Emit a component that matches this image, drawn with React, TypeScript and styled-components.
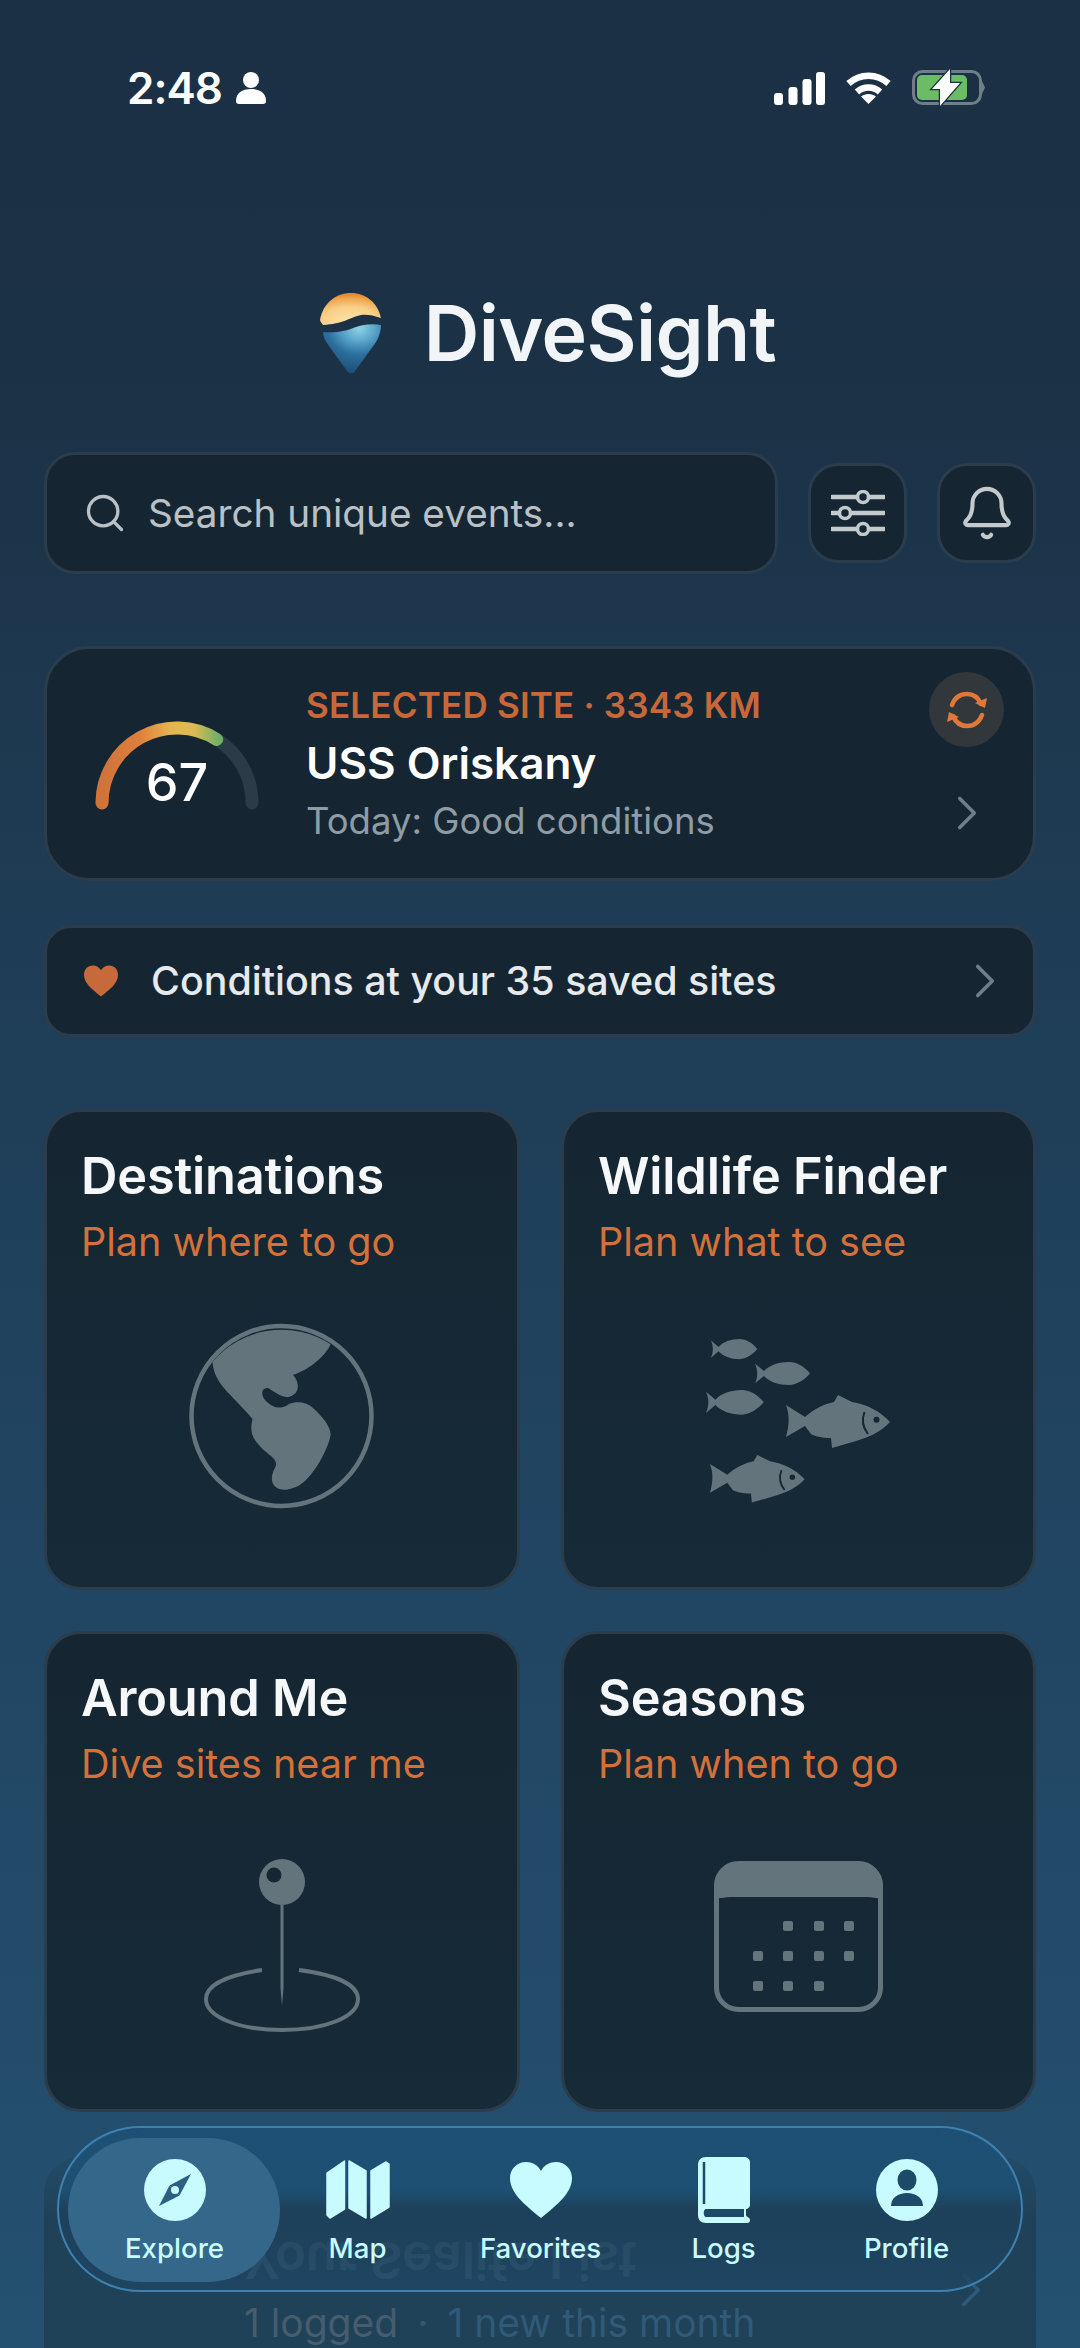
import React from "react"
import styled, { createGlobalStyle } from "styled-components"
import { Bell, ChevronRight, Search } from "lucide-react"

const GlobalStyle = createGlobalStyle`
  html, body {
    margin: 0;
    padding: 0;
    background: #1b3045;
  }
  * {
    box-sizing: border-box;
  }
`

const Page = styled.div`
  position: relative;
  width: 1080px;
  height: 2348px;
  padding: 0 44px;
  overflow: hidden;
  font-family: Inter, "Liberation Sans", sans-serif;
  background: linear-gradient(180deg, #1b3045 0%, #1b3146 16%, #1e3b53 36%, #214562 66%, #245170 100%);
`

const StatusBar = styled.div`
  display: flex;
  align-items: center;
  height: 36px;
  margin-top: 70px;
  padding: 0 51px 0 83px;
  color: #fff;
`

const Time = styled.span`
  font-size: 44px;
  font-weight: 600;
  line-height: 36px;
  margin-right: 14px;
  letter-spacing: -1px;
`

const StatusIcons = styled.div`
  display: flex;
  align-items: center;
  gap: 21px;
  margin-left: auto;
`

const Brand = styled.div`
  display: flex;
  align-items: center;
  justify-content: center;
  gap: 38px;
  height: 100px;
  margin-top: 177px;
  padding-left: 12px;
`

const BrandName = styled.h1`
  margin: 0;
  font-size: 77px;
  font-weight: 600;
  letter-spacing: -0.6px;
  color: #f2f5f7;
`

const SearchRow = styled.div`
  display: flex;
  align-items: center;
  gap: 30px;
  margin-top: 69px;
`

const SearchBox = styled.div`
  display: flex;
  align-items: center;
  gap: 21px;
  flex: 1;
  height: 122px;
  padding: 0 36px;
  background: #152632;
  border: 3px solid #2b3c4c;
  border-radius: 31px;
  color: #b9c1c7;
  font-size: 38.700px;
`

const IconButton = styled.div`
  display: flex;
  align-items: center;
  justify-content: center;
  width: 99px;
  height: 100px;
  background: #152632;
  border: 3px solid #2b3c4c;
  border-radius: 30px;
  color: #c3cace;
`

const SiteCard = styled.div`
  display: flex;
  align-items: center;
  height: 235px;
  margin-top: 72px;
  padding: 0 29px 0 47px;
  background: #152632;
  border: 3px solid #2b3c4c;
  border-radius: 45px;
`

const Gauge = styled.div`
  position: relative;
  width: 166px;
  height: 92px;
  margin: 2px 46px 0 0;
`

const GaugeValue = styled.span`
  position: absolute;
  left: 0;
  right: 0;
  bottom: -3px;
  text-align: center;
  font-size: 52px;
  font-weight: 500;
  color: #fff;
`

const SiteText = styled.div`
  display: flex;
  flex-direction: column;
`

const SiteLabel = styled.span`
  font-size: 35px;
  font-weight: 600;
  line-height: 40px;
  letter-spacing: 0.2px;
  color: #c8673a;
`

const SiteName = styled.span`
  margin-top: 11px;
  font-size: 44px;
  font-weight: 600;
  line-height: 54px;
  color: #fff;
`

const SiteStatus = styled.span`
  margin-top: 9px;
  font-size: 36.500px;
  line-height: 44px;
  color: #8f9ca5;
`

const SiteActions = styled.div`
  display: flex;
  flex-direction: column;
  align-items: center;
  gap: 37px;
  margin: -13px 0 0 auto;
  color: #6f7f8a;
`

const RefreshButton = styled.div`
  display: flex;
  align-items: center;
  justify-content: center;
  width: 75px;
  height: 75px;
  border-radius: 50%;
  background: #31373b;
`

const SavedRow = styled.div`
  display: flex;
  align-items: center;
  height: 112px;
  margin-top: 44px;
  padding: 0 19px 0 37px;
  background: #152632;
  border: 3px solid #2b3c4c;
  border-radius: 27px;
  font-size: 39.400px;
  font-weight: 500;
  color: #e6eaed;
`

const SavedText = styled.span`
  margin-left: 33px;
`

const SavedChevron = styled.span`
  display: flex;
  margin-left: auto;
  color: #6f7f8a;
`

const Grid = styled.div`
  display: grid;
  grid-template-columns: 476px 475px;
  grid-auto-rows: 481px;
  column-gap: 41px;
  row-gap: 41px;
  margin-top: 72px;
`

const Tile = styled.div`
  display: flex;
  flex-direction: column;
  padding: 35px 34px 0;
  background: linear-gradient(180deg, #152632, #172a38);
  border: 3px solid #2b3c4c;
  border-radius: 37px;
`

const TileTitle = styled.h2`
  margin: 0;
  font-size: 50.500px;
  font-weight: 600;
  line-height: 58px;
  letter-spacing: -0.2px;
  color: #f5f7f8;
`

const TileSub = styled.span`
  margin-top: 13px;
  font-size: 39.600px;
  line-height: 48px;
  color: #d4713a;
`

const TileArt = styled.div<{ $top: number }>`
  display: flex;
  justify-content: center;
  margin-top: ${({ $top }) => $top}px;
`

const LogCard = styled.div`
  position: relative;
  display: flex;
  flex-direction: column;
  height: 300px;
  margin-top: 45px;
  padding: 74px 0 0 200px;
  background: linear-gradient(180deg, rgba(31, 66, 89, 0.25), #1f4259 20%);
  border-radius: 36px;
`

const LogTitle = styled.span`
  font-size: 50.500px;
  font-weight: 600;
  line-height: 58px;
  color: #4a6a7d;
  transform: scaleY(-1);
`

const LogSub = styled.div`
  display: flex;
  gap: 19px;
  margin-top: 11px;
  font-size: 39px;
  line-height: 46px;
  color: #2f5a78;
`

const LogCount = styled.span`
  color: #475c6c;
`

const LogChevron = styled.span`
  position: absolute;
  top: 104px;
  right: 36px;
  display: flex;
  color: #2f5a78;
  transform: scaleY(-1);
`

const NavBar = styled.nav`
  position: absolute;
  left: 57px;
  top: 2126px;
  display: flex;
  width: 966px;
  height: 166px;
  padding: 10px 0 10px 24px;
  border: 2px solid #3e80b0;
  border-radius: 84px;
  background: linear-gradient(180deg, rgba(28, 80, 116, 0.92) 0%, rgba(29, 80, 116, 0.92) 38%, rgba(30, 64, 90, 0.8) 50%, rgba(30, 70, 100, 0.75) 100%);
`

const NavItem = styled.div<{ $active?: boolean }>`
  position: relative;
  display: flex;
  flex-direction: column;
  align-items: center;
  width: 183px;
  height: 144px;
  padding-top: 19px;
  color: #c8fbff;

  &::before {
    content: "";
    display: ${({ $active }) => ($active ? "block" : "none")};
    position: absolute;
    top: 0;
    bottom: 0;
    left: -15px;
    right: -14px;
    border-radius: 72px;
    background: #34678a;
  }
`

const NavIcon = styled.div`
  position: relative;
  display: flex;
  align-items: center;
  justify-content: center;
  height: 66px;
`

const NavLabel = styled.span`
  position: relative;
  margin-top: 8px;
  font-size: 27.600px;
  font-weight: 500;
  line-height: 34px;
`

const ink = "#64747c"

const Logo = () => (
  <svg width="70" height="90" viewBox="25 18 70 90">
    <defs>
      <radialGradient id="sun" cx="50%" cy="90%" r="85%">
        <stop offset="0%" stopColor="#fde3a8" />
        <stop offset="55%" stopColor="#f8cf88" />
        <stop offset="85%" stopColor="#f0a850" />
        <stop offset="100%" stopColor="#e48a30" />
      </radialGradient>
      <radialGradient id="sea" cx="62%" cy="8%" r="90%">
        <stop offset="0%" stopColor="#8fd3e6" />
        <stop offset="30%" stopColor="#5aa6cc" />
        <stop offset="60%" stopColor="#2b6f9e" />
        <stop offset="100%" stopColor="#1f5078" />
      </radialGradient>
    </defs>
    <path d="M29 50C32 33 45 23 60 23C75 23 87 33 90 48C82 45 75 44 70 45C60 47 52 54 32 55C31 53 29 52 29 50Z" fill="url(#sun)" />
    <path d="M32 62C45 63 55 61 62 58C70 55 80 53 90 55C90 62 87 70 83 75L64 101C62 104 58 104 56 101L38 76C34 71 32 66 32 62Z" fill="url(#sea)" />
  </svg>
)

const PersonGlyph = () => (
  <svg width="30" height="32" viewBox="0 0 30 32" fill="#fff">
    <ellipse cx="15" cy="8" rx="8" ry="8" />
    <path d="M0 29c0-8 6-12 15-12s15 4 15 12c0 2-1 3-3 3H3c-2 0-3-1-3-3z" />
  </svg>
)

const SignalGlyph = () => (
  <svg width="51" height="33" viewBox="0 0 51 33" fill="#fff">
    <rect x="0" y="21" width="9" height="12" rx="3" />
    <rect x="14.500" y="15" width="9" height="18" rx="3" />
    <rect x="28.500" y="7" width="9" height="26" rx="3" />
    <rect x="42" y="0" width="9" height="33" rx="3" />
  </svg>
)

const WifiGlyph = () => (
  <svg width="45" height="33" viewBox="0 0 45 33" fill="none" stroke="#fff" strokeWidth="6.500">
    <path d="M2.500 11.500C14 1 31 1 42.500 11.500" />
    <path d="M11 20c6.500-6 16.500-6 23 0" />
    <path d="M22.500 32l-7.500-7.500c4-3.500 11-3.500 15 0z" fill="#fff" stroke="none" />
  </svg>
)

const BatteryGlyph = () => (
  <svg width="73" height="38" viewBox="0 -1 73 38">
    <rect x="1.500" y="1.500" width="67" height="32" rx="9" fill="none" stroke="#6f7f87" strokeWidth="3" />
    <rect x="5" y="5" width="50" height="25" rx="5" fill="#6bbd63" />
    <path d="M70 11L73 17.500L70 24Z" fill="#6f7f87" />
    <path d="M38 -1L20 19h8v17L48 13H38Z" fill="#fff" stroke="#1b3045" strokeWidth="2.500" paintOrder="stroke" />
  </svg>
)

const SlidersGlyph = () => (
  <svg width="54" height="46" viewBox="0 0 54 46" fill="none" stroke="currentColor">
    <path d="M1 7h25M38 7h15M1 23h7M20 23h33M1 39h25M38 39h15" strokeWidth="4.500" strokeLinecap="round" />
    <circle cx="32" cy="7" r="5.500" strokeWidth="3.500" />
    <circle cx="14" cy="23" r="5.500" strokeWidth="3.500" />
    <circle cx="32" cy="39" r="5.500" strokeWidth="3.500" />
  </svg>
)

const GaugeArc = () => (
  <svg width="166" height="92" viewBox="0 0 166 92" fill="none" strokeWidth="13" strokeLinecap="round">
    <defs>
      <linearGradient id="gaugeFill" x1="8" y1="0" x2="125" y2="0" gradientUnits="userSpaceOnUse">
        <stop offset="0%" stopColor="#cf7339" />
        <stop offset="32%" stopColor="#df7f3c" />
        <stop offset="58%" stopColor="#e3b44f" />
        <stop offset="78%" stopColor="#e0bb52" />
        <stop offset="100%" stopColor="#6fb066" />
      </linearGradient>
    </defs>
    <path d="M8 84a75 75 0 0 1 150 0" stroke="#2b3b47" />
    <path d="M8 84a75 75 0 0 1 114.700-63.600" stroke="url(#gaugeFill)" />
  </svg>
)

const RefreshGlyph = () => (
  <svg width="42" height="40" viewBox="0 0 42 40" fill="none" stroke="#e0783a" strokeWidth="4.500" strokeLinecap="round">
    <path d="M6 15C9 7 15 4 21 4c6 0 11 3 14 10" />
    <path d="M36 25c-3 8-9 11-15 11-6 0-11-3-14-10" />
    <path d="M29 13l10 5 2-10zM13 27L3 22 1 32z" fill="#e0783a" stroke="none" />
  </svg>
)

const SavedHeart = () => (
  <svg width="34" height="32" viewBox="0 0 36 33" fill="#c66a3b">
    <path d="M18 33C8 25 0 19 0 10 0 4 4 0 9.500 0 13 0 16 2 18 5c2-3 5-5 8.500-5C32 0 36 4 36 10c0 9-8 15-18 23z" />
  </svg>
)

const GlobeArt = () => (
  <svg width="186" height="186" viewBox="0 0 186 186">
    <circle cx="92.500" cy="93" r="90" fill="none" stroke={ink} strokeWidth="4.500" />
    <path fill={ink} d="M23.500 39A90 90 0 0 1 141.600 21.300C137 32 122 46 104 52C110 58 111 68 104 72C97 77 90 72 79 65C71 65 72 74 78 79C84 85 92 87 100 81C108 78 118 79 124 85C134 94 142 104 141.600 112C139 128 120 162 104 165C94 169 85 166 83 158C82 148 88 144 87 140C85 133 76 130 70 122C62 114 61 106 63.500 96C52 82 38 70 31 60C26 52 24 46 23.500 39Z" />
  </svg>
)

const fishBig = "M0 11L19 23C28 15 38 10 48 8L52 1L66 8C80 10 94 17 104 28C94 39 82 43 70 47L46 54L45 44C36 44 28 42 25 40L19 32L0 43C3 32 4 22 0 11Z"
const fishSmall = "M0 2L9 11C14 4 24 0 34 0C42 0 50 6 55 14C50 21 42 28 34 28C24 28 14 24 9 17L0 26C3 18 3 10 0 2Z"

const FishArt = () => (
  <svg width="186" height="164" viewBox="0 0 186 164" fill={ink}>
    <path d={fishSmall} transform="translate(5 0) scale(0.84 0.72)" />
    <path d={fishSmall} transform="translate(49 23) scale(1 0.82)" />
    <path d={fishSmall} transform="translate(0 51) scale(1.05 0.88)" />
    <g transform="translate(80 55)">
      <path d={fishBig} />
      <circle cx="90.500" cy="25.700" r="3" fill="#162633" />
      <path d="M78.500 18Q74 30 82 40" fill="none" stroke="#162633" strokeWidth="2" />
    </g>
    <g transform="translate(4 115) scale(0.91 0.9)">
      <path d={fishBig} />
      <circle cx="90.500" cy="25.700" r="3" fill="#162633" />
      <path d="M78.500 18Q74 30 82 40" fill="none" stroke="#162633" strokeWidth="2" />
    </g>
  </svg>
)

const PinArt = () => (
  <svg width="158" height="176" viewBox="0 0 158 176">
    <path d="M59 112C24 117 3 127 3 141C3 159 36 172 79 172C122 172 155 159 155 141C155 127 134 117 96 112" fill="none" stroke={ink} strokeWidth="4" />
    <circle cx="79" cy="24" r="23" fill={ink} />
    <circle cx="71" cy="17" r="7.500" fill="#162633" />
    <path d="M77.500 45H80.500V130L79 148L77.500 130Z" fill={ink} />
  </svg>
)

const CalendarArt = () => (
  <svg width="170" height="152" viewBox="0 0 170 152" fill={ink}>
    <rect x="2.500" y="2.500" width="164" height="146" rx="22" fill="none" stroke={ink} strokeWidth="5" />
    <path d="M2 38V24C2 11 11 1 24 1H145C158 1 167 11 167 24V38C167 38 160 36 150 36H20C10 36 2 38 2 38Z" />
    {[[69, 60], [100, 60], [130, 60], [39, 90], [69, 90], [100, 90], [130, 90], [39, 120], [69, 120], [100, 120]].map(([x, y]) => (
      <rect key={`${x}-${y}`} x={x} y={y} width="10" height="10" rx="2" />
    ))}
  </svg>
)

const CompassGlyph = () => (
  <svg width="62" height="62" viewBox="0 0 62 62">
    <circle cx="31" cy="31" r="31" fill="#c8fbff" />
    <path d="M47 15L35.500 36.500L25.500 26.500Z" fill="#2c5f80" />
    <path d="M15 47L25.500 26.500L35.500 36.500Z" fill="#2c5f80" />
    <circle cx="31" cy="31" r="4" fill="#c8fbff" />
  </svg>
)

const MapGlyph = () => (
  <svg width="64" height="60" viewBox="0 0 64 60" fill="currentColor" stroke="currentColor" strokeWidth="1.500" strokeLinejoin="round">
    <path d="M1 13L18.500 1V49L4 58L1 55Z" />
    <path d="M23 1L40 11V58L23 48Z" />
    <path d="M45 11L60 2L63 4V47L45 58Z" />
  </svg>
)

const NavHeart = () => (
  <svg width="62" height="56" viewBox="0 0 62 56" fill="currentColor">
    <path d="M31 56C14 42 0 31 0 16 0 7 7 0 16 0 22 0 28 3 31 9 34 3 40 0 46 0 55 0 62 7 62 16 62 31 48 42 31 56Z" />
  </svg>
)

const BookGlyph = () => (
  <svg width="52" height="66" viewBox="0 0 52 66">
    <path fill="currentColor" d="M8 0H46C49 0 52 2 52 5V48C52 50 50 52 48 52V58C48 60 52 60 52 63C52 65 51 66 49 66H8C3 66 0 63 0 58V8C0 3 3 0 8 0Z" />
    <path d="M6 5V47" stroke="#1d4a68" strokeWidth="2.500" />
    <path d="M6 52H46V60H8C5 60 5 52 8 52Z" fill="#1d4a68" />
  </svg>
)

const ProfileGlyph = () => (
  <svg width="62" height="62" viewBox="0 0 62 62">
    <circle cx="31" cy="31" r="31" fill="currentColor" />
    <ellipse cx="31" cy="21" rx="9.500" ry="10.500" fill="#1d4a68" />
    <path d="M15 47C15 39 22 34 31 34C40 34 47 39 47 47Z" fill="#1d4a68" />
  </svg>
)

const tiles = [
  { title: "Destinations", sub: "Plan where to go", top: 57, art: <GlobeArt /> },
  { title: "Wildlife Finder", sub: "Plan what to see", top: 73, art: <FishArt /> },
  { title: "Around Me", sub: "Dive sites near me", top: 70, art: <PinArt /> },
  { title: "Seasons", sub: "Plan when to go", top: 73, art: <CalendarArt /> },
]

const navItems = [
  { label: "Explore", icon: <CompassGlyph />, active: true },
  { label: "Map", icon: <MapGlyph /> },
  { label: "Favorites", icon: <NavHeart /> },
  { label: "Logs", icon: <BookGlyph /> },
  { label: "Profile", icon: <ProfileGlyph /> },
]

const App = () => (
  <Page>
    <GlobalStyle />
    <StatusBar>
      <Time>2:48</Time>
      <PersonGlyph />
      <StatusIcons>
        <SignalGlyph />
        <WifiGlyph />
        <BatteryGlyph />
      </StatusIcons>
    </StatusBar>

    <Brand>
      <Logo />
      <BrandName>DiveSight</BrandName>
    </Brand>

    <SearchRow>
      <SearchBox>
        <Search size={44} strokeWidth={1.8} />
        Search unique events...
      </SearchBox>
      <IconButton><SlidersGlyph /></IconButton>
      <IconButton><Bell size={58} strokeWidth={1.7} /></IconButton>
    </SearchRow>

    <SiteCard>
      <Gauge>
        <GaugeArc />
        <GaugeValue>67</GaugeValue>
      </Gauge>
      <SiteText>
        <SiteLabel>SELECTED SITE · 3343 KM</SiteLabel>
        <SiteName>USS Oriskany</SiteName>
        <SiteStatus>Today: Good conditions</SiteStatus>
      </SiteText>
      <SiteActions>
        <RefreshButton><RefreshGlyph /></RefreshButton>
        <ChevronRight size={58} strokeWidth={1.5} />
      </SiteActions>
    </SiteCard>

    <SavedRow>
      <SavedHeart />
      <SavedText>Conditions at your 35 saved sites</SavedText>
      <SavedChevron><ChevronRight size={58} strokeWidth={1.5} /></SavedChevron>
    </SavedRow>

    <Grid>
      {tiles.map((tile) => (
        <Tile key={tile.title}>
          <TileTitle>{tile.title}</TileTitle>
          <TileSub>{tile.sub}</TileSub>
          <TileArt $top={tile.top}>{tile.art}</TileArt>
        </Tile>
      ))}
    </Grid>

    <LogCard>
      <LogTitle>Your Sealife List</LogTitle>
      <LogSub>
        <LogCount>1 logged</LogCount>
        <span>·</span>
        <span>1 new this month</span>
      </LogSub>
      <LogChevron><ChevronRight size={58} strokeWidth={1.5} /></LogChevron>
    </LogCard>

    <NavBar>
      {navItems.map((item) => (
        <NavItem key={item.label} $active={item.active}>
          <NavIcon>{item.icon}</NavIcon>
          <NavLabel>{item.label}</NavLabel>
        </NavItem>
      ))}
    </NavBar>
  </Page>
)

export default App
